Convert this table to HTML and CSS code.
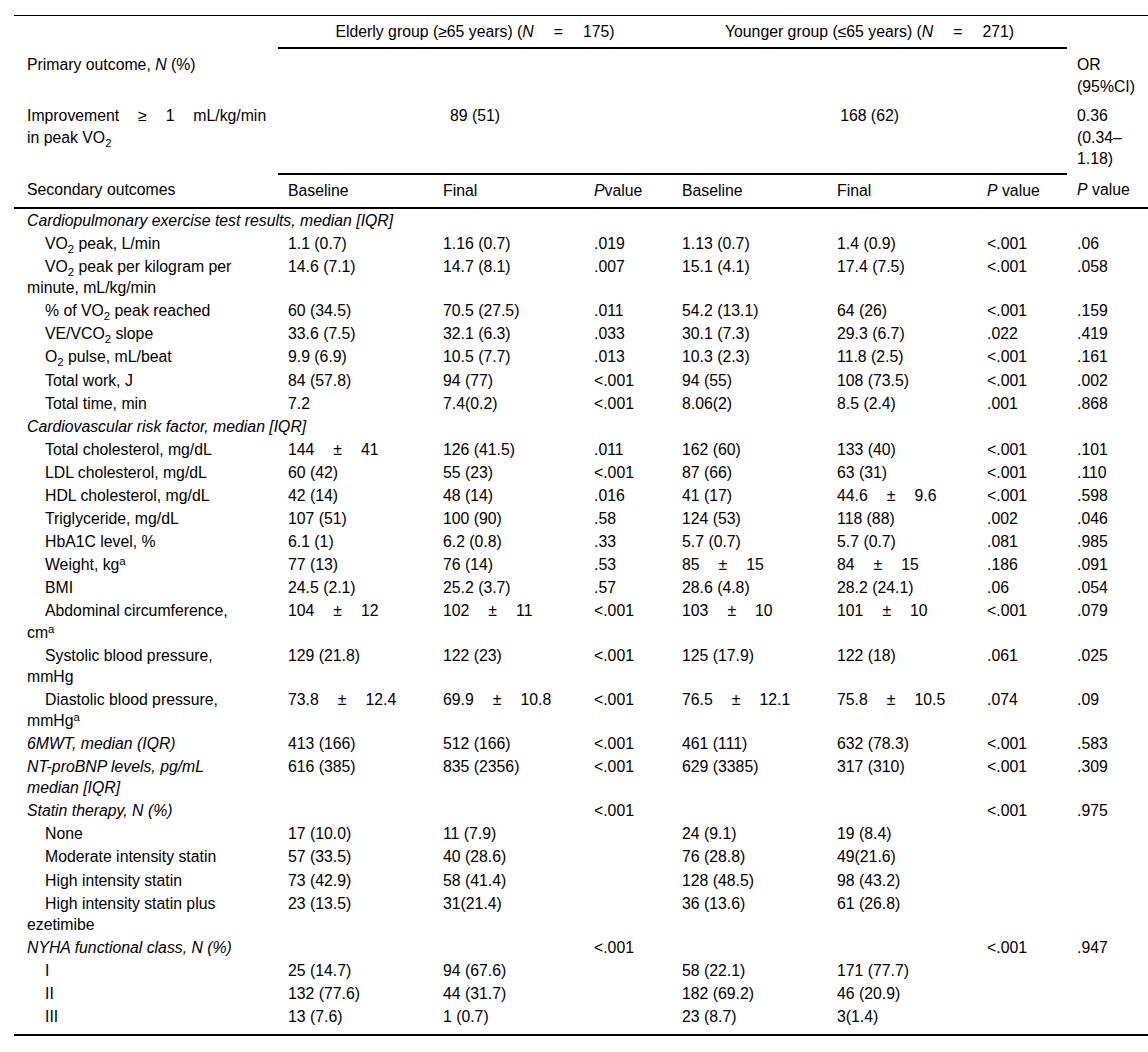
FILE: index.html
```html
<!DOCTYPE html>
<html lang="en">
<head>
<meta charset="utf-8">
<title>Outcomes table</title>
<link rel="stylesheet" href="styles.css">
</head>
<body>
<table class="tbl">
  <colgroup>
    <col class="c1"><col class="c2"><col class="c3"><col class="c4"><col class="c5"><col class="c6"><col class="c7"><col class="c8">
  </colgroup>
  <thead>
    <tr class="grp">
      <th class="lab"></th>
      <th colspan="3" class="ctr rule">Elderly group (≥65 years) (<i>N</i><span class="eq">=</span>175)</th>
      <th colspan="3" class="ctr rule">Younger group (≤65 years) (<i>N</i><span class="eq">=</span>271)</th>
      <th></th>
    </tr>
    <tr class="hd r2">
      <th class="lab">Primary outcome, <i>N</i> (%)</th>
      <th colspan="3"></th>
      <th colspan="3"></th>
      <th>OR (95%CI)</th>
    </tr>
    <tr class="hd r3">
      <td class="lab"><span class="just">Improvement ≥ 1 mL/kg/min</span><br>in peak VO<sub>2</sub></td>
      <td colspan="3" class="ctr rule">89 (51)</td>
      <td colspan="3" class="ctr rule">168 (62)</td>
      <td>0.36 (0.34–1.18)</td>
    </tr>
    <tr class="hd sec">
      <th class="lab">Secondary outcomes</th>
      <th>Baseline</th>
      <th>Final</th>
      <th><i>P</i>value</th>
      <th>Baseline</th>
      <th>Final</th>
      <th><i>P</i> value</th>
      <th><i>P</i> value</th>
    </tr>
  </thead>
  <tbody>
    <tr><td colspan="8" class="lab cat">Cardiopulmonary exercise test results, median [IQR]</td></tr>
    <tr><td class="lab ind">VO<sub>2</sub> peak, L/min</td><td>1.1 (0.7)</td><td>1.16 (0.7)</td><td>.019</td><td>1.13 (0.7)</td><td>1.4 (0.9)</td><td>&lt;.001</td><td>.06</td></tr>
    <tr><td class="lab ind">VO<sub>2</sub> peak per kilogram per<br>minute, mL/kg/min</td><td>14.6 (7.1)</td><td>14.7 (8.1)</td><td>.007</td><td>15.1 (4.1)</td><td>17.4 (7.5)</td><td>&lt;.001</td><td>.058</td></tr>
    <tr><td class="lab ind">% of VO<sub>2</sub> peak reached</td><td>60 (34.5)</td><td>70.5 (27.5)</td><td>.011</td><td>54.2 (13.1)</td><td>64 (26)</td><td>&lt;.001</td><td>.159</td></tr>
    <tr><td class="lab ind">VE/VCO<sub>2</sub> slope</td><td>33.6 (7.5)</td><td>32.1 (6.3)</td><td>.033</td><td>30.1 (7.3)</td><td>29.3 (6.7)</td><td>.022</td><td>.419</td></tr>
    <tr><td class="lab ind">O<sub>2</sub> pulse, mL/beat</td><td>9.9 (6.9)</td><td>10.5 (7.7)</td><td>.013</td><td>10.3 (2.3)</td><td>11.8 (2.5)</td><td>&lt;.001</td><td>.161</td></tr>
    <tr><td class="lab ind">Total work, J</td><td>84 (57.8)</td><td>94 (77)</td><td>&lt;.001</td><td>94 (55)</td><td>108 (73.5)</td><td>&lt;.001</td><td>.002</td></tr>
    <tr><td class="lab ind">Total time, min</td><td>7.2</td><td>7.4(0.2)</td><td>&lt;.001</td><td>8.06(2)</td><td>8.5 (2.4)</td><td>.001</td><td>.868</td></tr>
    <tr><td colspan="8" class="lab cat">Cardiovascular risk factor, median [IQR]</td></tr>
    <tr><td class="lab ind">Total cholesterol, mg/dL</td><td>144<span class="pm">±</span>41</td><td>126 (41.5)</td><td>.011</td><td>162 (60)</td><td>133 (40)</td><td>&lt;.001</td><td>.101</td></tr>
    <tr><td class="lab ind">LDL cholesterol, mg/dL</td><td>60 (42)</td><td>55 (23)</td><td>&lt;.001</td><td>87 (66)</td><td>63 (31)</td><td>&lt;.001</td><td>.110</td></tr>
    <tr><td class="lab ind">HDL cholesterol, mg/dL</td><td>42 (14)</td><td>48 (14)</td><td>.016</td><td>41 (17)</td><td>44.6<span class="pm">±</span>9.6</td><td>&lt;.001</td><td>.598</td></tr>
    <tr><td class="lab ind">Triglyceride, mg/dL</td><td>107 (51)</td><td>100 (90)</td><td>.58</td><td>124 (53)</td><td>118 (88)</td><td>.002</td><td>.046</td></tr>
    <tr><td class="lab ind">HbA1C level, %</td><td>6.1 (1)</td><td>6.2 (0.8)</td><td>.33</td><td>5.7 (0.7)</td><td>5.7 (0.7)</td><td>.081</td><td>.985</td></tr>
    <tr><td class="lab ind">Weight, kg<sup>a</sup></td><td>77 (13)</td><td>76 (14)</td><td>.53</td><td>85<span class="pm">±</span>15</td><td>84<span class="pm">±</span>15</td><td>.186</td><td>.091</td></tr>
    <tr><td class="lab ind">BMI</td><td>24.5 (2.1)</td><td>25.2 (3.7)</td><td>.57</td><td>28.6 (4.8)</td><td>28.2 (24.1)</td><td>.06</td><td>.054</td></tr>
    <tr><td class="lab ind">Abdominal circumference,<br>cm<sup>a</sup></td><td>104<span class="pm">±</span>12</td><td>102<span class="pm">±</span>11</td><td>&lt;.001</td><td>103<span class="pm">±</span>10</td><td>101<span class="pm">±</span>10</td><td>&lt;.001</td><td>.079</td></tr>
    <tr><td class="lab ind">Systolic blood pressure,<br>mmHg</td><td>129 (21.8)</td><td>122 (23)</td><td>&lt;.001</td><td>125 (17.9)</td><td>122 (18)</td><td>.061</td><td>.025</td></tr>
    <tr><td class="lab ind">Diastolic blood pressure,<br>mmHg<sup>a</sup></td><td>73.8<span class="pm">±</span>12.4</td><td>69.9<span class="pm">±</span>10.8</td><td>&lt;.001</td><td>76.5<span class="pm">±</span>12.1</td><td>75.8<span class="pm">±</span>10.5</td><td>.074</td><td>.09</td></tr>
    <tr><td class="lab cat">6MWT, median (IQR)</td><td>413 (166)</td><td>512 (166)</td><td>&lt;.001</td><td>461 (111)</td><td>632 (78.3)</td><td>&lt;.001</td><td>.583</td></tr>
    <tr><td class="lab cat">NT-proBNP levels, pg/mL<br>median [IQR]</td><td>616 (385)</td><td>835 (2356)</td><td>&lt;.001</td><td>629 (3385)</td><td>317 (310)</td><td>&lt;.001</td><td>.309</td></tr>
    <tr><td class="lab cat">Statin therapy, N (%)</td><td></td><td></td><td>&lt;.001</td><td></td><td></td><td>&lt;.001</td><td>.975</td></tr>
    <tr><td class="lab ind">None</td><td>17 (10.0)</td><td>11 (7.9)</td><td></td><td>24 (9.1)</td><td>19 (8.4)</td><td></td><td></td></tr>
    <tr><td class="lab ind">Moderate intensity statin</td><td>57 (33.5)</td><td>40 (28.6)</td><td></td><td>76 (28.8)</td><td>49(21.6)</td><td></td><td></td></tr>
    <tr><td class="lab ind">High intensity statin</td><td>73 (42.9)</td><td>58 (41.4)</td><td></td><td>128 (48.5)</td><td>98 (43.2)</td><td></td><td></td></tr>
    <tr><td class="lab ind">High intensity statin plus<br>ezetimibe</td><td>23 (13.5)</td><td>31(21.4)</td><td></td><td>36 (13.6)</td><td>61 (26.8)</td><td></td><td></td></tr>
    <tr><td class="lab cat">NYHA functional class, N (%)</td><td></td><td></td><td>&lt;.001</td><td></td><td></td><td>&lt;.001</td><td>.947</td></tr>
    <tr><td class="lab ind">I</td><td>25 (14.7)</td><td>94 (67.6)</td><td></td><td>58 (22.1)</td><td>171 (77.7)</td><td></td><td></td></tr>
    <tr><td class="lab ind">II</td><td>132 (77.6)</td><td>44 (31.7)</td><td></td><td>182 (69.2)</td><td>46 (20.9)</td><td></td><td></td></tr>
    <tr class="last"><td class="lab ind">III</td><td>13 (7.6)</td><td>1 (0.7)</td><td></td><td>23 (8.7)</td><td>3(1.4)</td><td></td><td></td></tr>
  </tbody>
</table>
</body>
</html>
```
FILE: styles.css
```css
html, body {
  margin: 0;
  padding: 0;
  background: #fff;
}
body {
  font-family: "Liberation Sans", Arial, Helvetica, sans-serif;
  font-size: 15.8px;
  color: #000;
}
.tbl {
  border-collapse: collapse;
  table-layout: fixed;
  width: 1134px;
  margin: 15px 0 0 14px;
  border-top: 1px solid #000;
  border-bottom: 2px solid #000;
}
.c1 { width: 264px; }
.c2 { width: 155px; }
.c3 { width: 151px; }
.c4 { width: 88px; }
.c5 { width: 155px; }
.c6 { width: 150px; }
.c7 { width: 90px; }
.c8 { width: 81px; }
.tbl th,
.tbl td {
  padding: 1px 10px;
  vertical-align: top;
  text-align: left;
  font-weight: normal;
  line-height: 21.1px;
}
.tbl thead th,
.tbl thead td {
  line-height: 21.4px;
}
.tbl .lab {
  padding-left: 13px;
  padding-right: 11px;
}
.tbl .grp th {
  padding-top: 5px;
  padding-bottom: 5px;
}
.tbl .r2 th {
  padding-top: 6px;
  padding-bottom: 4px;
}
.tbl .r3 td {
  padding-top: 4px;
  padding-bottom: 5px;
}
.tbl .sec th {
  padding-top: 5px;
  padding-bottom: 5px;
  border-bottom: 2px solid #000;
}
.tbl .last td {
  padding-bottom: 7px;
}
.tbl .ctr {
  text-align: center;
}
.tbl .rule {
  border-bottom: 2px solid #000;
}
.tbl .ind {
  text-indent: 18px;
}
.tbl .cat {
  font-style: italic;
}
.just {
  white-space: nowrap;
  word-spacing: 14.5px;
}
.eq {
  margin: 0 20px;
}
.pm {
  margin: 0 19px;
}
sub, sup {
  font-size: 0.72em;
  line-height: 0;
}
sub {
  vertical-align: -0.35em;
}
sup {
  vertical-align: 0.45em;
}
```
